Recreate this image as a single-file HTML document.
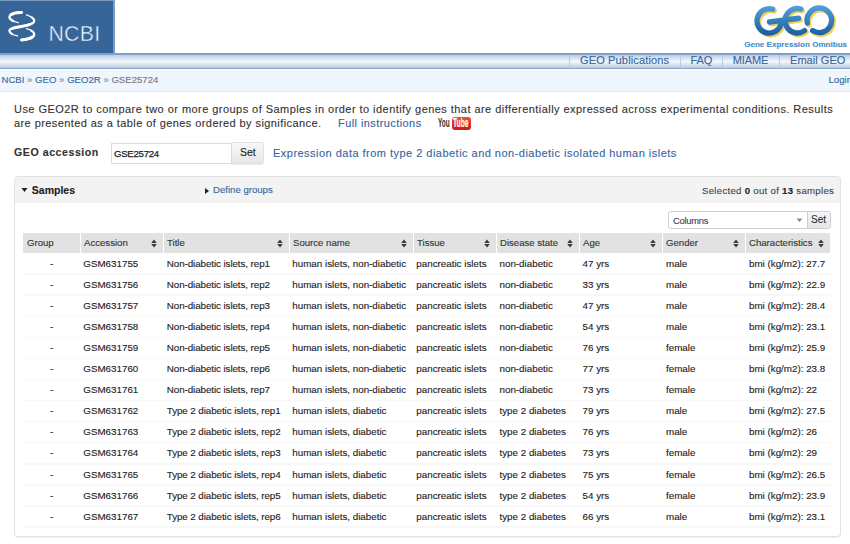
<!DOCTYPE html>
<html><head><meta charset="utf-8"><style>
html,body{margin:0;padding:0;width:850px;height:544px;overflow:hidden;background:#fff;position:relative}
.t{position:absolute;white-space:nowrap;font-family:"Liberation Sans", sans-serif;-webkit-text-stroke:0.12px currentColor;}
.b{position:absolute;}
</style></head><body>
<div class="b" style="left:0px;top:0px;width:115px;height:52.8px;background:#366699;border-top:1.5px solid #7d9dc2;border-right:2px solid #7d9dc2;box-sizing:border-box"></div>
<svg class="b" style="left:0;top:0" width="60" height="52" viewBox="0 0 60 52"><g fill="none" stroke="#fff" stroke-linecap="round"><path d="M21.5 12.4 C15 12.2 9.4 14.5 9.4 17.1 C9.4 19.5 13 21.5 18.2 22.6" stroke-width="1.3"/><path d="M21.5 12.4 C15 12.2 9.4 14.5 9.4 17.1 C9.4 19.5 13 21.5 18.2 22.6" pathLength="100" stroke-width="2.2" stroke-dasharray="80 300" stroke-dashoffset="0"/><path d="M21.5 12.4 C15 12.2 9.4 14.5 9.4 17.1 C9.4 19.5 13 21.5 18.2 22.6" pathLength="100" stroke-width="3.0" stroke-dasharray="45 300" stroke-dashoffset="0"/><path d="M26.5 14.9 C31 16.5 34.2 18.5 34.2 20.9 C34.2 25 22 26 13.2 28.1 C10.5 28.8 9.4 29.5 9.4 30.8 C9.4 33 12.5 35 17.6 35.8" stroke-width="1.3"/><path d="M26.5 14.9 C31 16.5 34.2 18.5 34.2 20.9 C34.2 25 22 26 13.2 28.1 C10.5 28.8 9.4 29.5 9.4 30.8 C9.4 33 12.5 35 17.6 35.8" pathLength="100" stroke-width="2.2" stroke-dasharray="76 300" stroke-dashoffset="-12"/><path d="M26.5 14.9 C31 16.5 34.2 18.5 34.2 20.9 C34.2 25 22 26 13.2 28.1 C10.5 28.8 9.4 29.5 9.4 30.8 C9.4 33 12.5 35 17.6 35.8" pathLength="100" stroke-width="3.0" stroke-dasharray="35 300" stroke-dashoffset="-35"/><path d="M26.5 28.7 C31 30 34.2 32 34.2 34.2 C34.2 37.5 28 39.5 21.5 39.9" stroke-width="1.3"/><path d="M26.5 28.7 C31 30 34.2 32 34.2 34.2 C34.2 37.5 28 39.5 21.5 39.9" pathLength="100" stroke-width="2.2" stroke-dasharray="80 300" stroke-dashoffset="-20"/><path d="M26.5 28.7 C31 30 34.2 32 34.2 34.2 C34.2 37.5 28 39.5 21.5 39.9" pathLength="100" stroke-width="3.0" stroke-dasharray="45 300" stroke-dashoffset="-55"/></g></svg>
<div class="t" style="left:48.4px;top:24.17px;font-size:21.3px;line-height:21.3px;color:#f4f6f8;font-weight:normal;letter-spacing:0.3px;-webkit-text-stroke:0.45px #366699;">NCBI</div>
<svg class="b" style="left:745px;top:0" width="105" height="52" viewBox="0 0 105 52">
<defs><linearGradient id="bg" gradientUnits="userSpaceOnUse" x1="0" y1="5" x2="0" y2="36"><stop offset="0" stop-color="#52a2dc"/><stop offset="1" stop-color="#1a5c9e"/></linearGradient></defs>
<g fill="none" stroke-linecap="round" stroke-width="5.4">
<g stroke="#f3cf55" transform="translate(1.6,1.8)">
<path d="M27.6 9.2 A12.2 12.2 0 1 0 35.9 24.5"/><path d="M24.5 22 L53.5 18.2"/>
<path d="M55.8 9.0 A12.2 12.2 0 1 0 59.5 30.6"/>
<path d="M67.6 30.6 A12.3 12.3 0 1 0 62.3 23"/>
</g>
<g stroke="url(#bg)">
<path d="M27.6 9.2 A12.2 12.2 0 1 0 35.9 24.5"/><path d="M24.5 22 L53.5 18.2"/>
<path d="M55.8 9.0 A12.2 12.2 0 1 0 59.5 30.6"/>
<path d="M67.6 30.6 A12.3 12.3 0 1 0 62.3 23"/>
</g>
</g></svg>
<div class="t" style="left:744.2px;top:41.18px;font-size:8.06px;line-height:8.06px;color:#4a8cc8;font-weight:bold;letter-spacing:0px;">Gene Expression Omnibus</div>
<div class="b" style="left:0px;top:53px;width:850px;height:15.5px;background:linear-gradient(#bccde2,#f3f7fb 50%,#b9cbe0);border-top:2px solid #7f9fc6;border-bottom:1.5px solid #87a5c9;box-sizing:border-box"></div>
<div class="b" style="left:569px;top:55px;width:1px;height:12px;background:#b0cdf0"></div>
<div class="b" style="left:679.5px;top:55px;width:1px;height:12px;background:#b0cdf0"></div>
<div class="b" style="left:721.5px;top:55px;width:1px;height:12px;background:#b0cdf0"></div>
<div class="b" style="left:778.5px;top:55px;width:1px;height:12px;background:#b0cdf0"></div>
<div class="t" style="left:580px;top:54.89px;font-size:11px;line-height:11px;color:#3566a0;font-weight:normal;letter-spacing:0.15px;">GEO Publications</div>
<div class="t" style="left:690.5px;top:54.89px;font-size:11px;line-height:11px;color:#3566a0;font-weight:normal;letter-spacing:-0.1px;">FAQ</div>
<div class="t" style="left:732.8px;top:54.89px;font-size:11px;line-height:11px;color:#3566a0;font-weight:normal;letter-spacing:-0.1px;">MIAME</div>
<div class="t" style="left:790px;top:54.89px;font-size:11px;line-height:11px;color:#3566a0;font-weight:normal;letter-spacing:0.05px;">Email GEO</div>
<div class="b" style="left:0px;top:68.5px;width:850px;height:23px;background:#eff6fd;border-top:1px solid #fbfdff;border-bottom:1px solid #e6e8ea;box-sizing:border-box"></div>
<div class="t" style="left:1.5px;top:74.87px;font-size:9.6px;line-height:9.6px;color:#777;font-weight:normal;letter-spacing:0px;"><span style="color:#3566a0">NCBI</span> <span style="color:#888">&raquo;</span> <span style="color:#3566a0">GEO</span> <span style="color:#888">&raquo;</span> <span style="color:#3566a0">GEO2R</span> <span style="color:#888">&raquo;</span> GSE25724</div>
<div class="t" style="left:828.5px;top:74.87px;font-size:9.6px;line-height:9.6px;color:#3566a0;font-weight:normal;letter-spacing:0px;">Login</div>
<div class="t" style="left:14px;top:104.49px;font-size:11px;line-height:11px;color:#333;font-weight:normal;letter-spacing:0.45px;">Use GEO2R to compare two or more groups of Samples in order to identify genes that are differentially expressed across experimental conditions. Results</div>
<div class="t" style="left:14px;top:117.79px;font-size:11px;line-height:11px;color:#333;font-weight:normal;letter-spacing:0.42px;">are presented as a table of genes ordered by significance.</div>
<div class="t" style="left:338px;top:117.79px;font-size:11px;line-height:11px;color:#3566a0;font-weight:normal;letter-spacing:0.42px;">Full instructions</div>
<div class="t" style="left:438.2px;top:117.44px;font-size:12px;line-height:12px;color:#3a3a3a;font-weight:bold;letter-spacing:0px;transform:scaleX(0.54);transform-origin:0 0;">You</div>
<div class="b" style="left:451.5px;top:117px;width:19px;height:12.6px;background:linear-gradient(#f0503c,#c41c14);border-radius:3px"></div>
<div class="t" style="left:453.2px;top:117.44px;font-size:12px;line-height:12px;color:#fff;font-weight:bold;letter-spacing:0px;transform:scaleX(0.56);transform-origin:0 0;">Tube</div>
<div class="t" style="left:14px;top:147.23px;font-size:10.6px;line-height:10.6px;color:#333;font-weight:bold;letter-spacing:0.55px;">GEO accession</div>
<div class="b" style="left:111px;top:143px;width:121px;height:21px;background:#fff;border:1px solid #dcdcdc;box-sizing:border-box"></div>
<div class="t" style="left:114px;top:149.17px;font-size:9.6px;line-height:9.6px;color:#222;font-weight:normal;letter-spacing:-0.25px;-webkit-text-stroke:0.25px #222;">GSE25724</div>
<div class="b" style="left:232px;top:142px;width:32px;height:22px;background:linear-gradient(#f8f8f8,#e6e6e6);border:1px solid #e2e2e2;border-left:none;border-radius:0 3px 3px 0;box-sizing:border-box;box-shadow:0 1px 1px rgba(0,0,0,0.08)"></div>
<div class="t" style="left:240px;top:146.81px;font-size:10.5px;line-height:10.5px;color:#222;font-weight:normal;letter-spacing:0px;">Set</div>
<div class="t" style="left:273px;top:147.69px;font-size:11px;line-height:11px;color:#3566a0;font-weight:normal;letter-spacing:0.475px;">Expression data from type 2 diabetic and non-diabetic isolated human islets</div>
<div class="b" style="left:14px;top:176.3px;width:827px;height:360.3px;background:#fff;border:1px solid #e2e2e2;border-radius:4px;box-sizing:border-box;box-shadow:0 1px 1px rgba(0,0,0,0.06)"></div>
<div class="b" style="left:15px;top:177px;width:825px;height:25.5px;background:#f3f3f3;border-radius:3px 3px 0 0"></div>
<svg class="b" style="left:21px;top:187px" width="8" height="6"><path d="M0.5 1 L6.5 1 L3.5 5 Z" fill="#222"/></svg>
<div class="t" style="left:31.8px;top:184.91px;font-size:10.5px;line-height:10.5px;color:#222;font-weight:bold;letter-spacing:0px;">Samples</div>
<svg class="b" style="left:204px;top:187px" width="6" height="8"><path d="M1 1 L5 4 L1 7 Z" fill="#222"/></svg>
<div class="t" style="left:213px;top:184.87px;font-size:9.6px;line-height:9.6px;color:#3566a0;font-weight:normal;letter-spacing:0px;">Define groups</div>
<div class="t" style="left:702px;top:186.27px;font-size:9.6px;line-height:9.6px;color:#444;font-weight:normal;letter-spacing:0.3px;">Selected <b style="color:#222">0</b> out of <b style="color:#222">13</b> samples</div>
<div class="b" style="left:668px;top:211px;width:140px;height:18px;background:#fff;border:1px solid #cfcfcf;border-radius:3px 0 0 3px;box-sizing:border-box"></div>
<div class="t" style="left:673px;top:215.54px;font-size:9.4px;line-height:9.4px;color:#444;font-weight:normal;letter-spacing:-0.25px;">Columns</div>
<svg class="b" style="left:796px;top:218px" width="7" height="5"><path d="M0.5 0.5 L6.5 0.5 L3.5 4 Z" fill="#888"/></svg>
<div class="b" style="left:807px;top:211px;width:24px;height:18px;background:linear-gradient(#f7f7f7,#e6e6e6);border:1px solid #cfcfcf;border-radius:0 3px 3px 0;box-sizing:border-box"></div>
<div class="t" style="left:811px;top:214.73px;font-size:10px;line-height:10px;color:#333;font-weight:normal;letter-spacing:0px;">Set</div>
<div class="b" style="left:23px;top:233px;width:57px;height:20px;background:#e2e2e2"></div>
<div class="t" style="left:27px;top:238.37px;font-size:9.6px;line-height:9.6px;color:#333;font-weight:normal;letter-spacing:0px;">Group</div>
<div class="b" style="left:81px;top:233px;width:82px;height:20px;background:#e2e2e2"></div>
<div class="t" style="left:84px;top:238.37px;font-size:9.6px;line-height:9.6px;color:#333;font-weight:normal;letter-spacing:0px;">Accession</div>
<svg class="b" style="left:151px;top:239px" width="6" height="9"><path d="M3 0.6 L5.8 4.0 L0.2 4.0 Z M3 8.4 L5.8 5.0 L0.2 5.0 Z" fill="#3a3a3a"/></svg>
<div class="b" style="left:164px;top:233px;width:125px;height:20px;background:#e2e2e2"></div>
<div class="t" style="left:167px;top:238.37px;font-size:9.6px;line-height:9.6px;color:#333;font-weight:normal;letter-spacing:0px;">Title</div>
<svg class="b" style="left:277px;top:239px" width="6" height="9"><path d="M3 0.6 L5.8 4.0 L0.2 4.0 Z M3 8.4 L5.8 5.0 L0.2 5.0 Z" fill="#3a3a3a"/></svg>
<div class="b" style="left:290px;top:233px;width:123px;height:20px;background:#e2e2e2"></div>
<div class="t" style="left:293px;top:238.37px;font-size:9.6px;line-height:9.6px;color:#333;font-weight:normal;letter-spacing:0px;">Source name</div>
<svg class="b" style="left:401px;top:239px" width="6" height="9"><path d="M3 0.6 L5.8 4.0 L0.2 4.0 Z M3 8.4 L5.8 5.0 L0.2 5.0 Z" fill="#3a3a3a"/></svg>
<div class="b" style="left:414px;top:233px;width:82px;height:20px;background:#e2e2e2"></div>
<div class="t" style="left:417px;top:238.37px;font-size:9.6px;line-height:9.6px;color:#333;font-weight:normal;letter-spacing:0px;">Tissue</div>
<svg class="b" style="left:484px;top:239px" width="6" height="9"><path d="M3 0.6 L5.8 4.0 L0.2 4.0 Z M3 8.4 L5.8 5.0 L0.2 5.0 Z" fill="#3a3a3a"/></svg>
<div class="b" style="left:497px;top:233px;width:82px;height:20px;background:#e2e2e2"></div>
<div class="t" style="left:500px;top:238.37px;font-size:9.6px;line-height:9.6px;color:#333;font-weight:normal;letter-spacing:0px;">Disease state</div>
<svg class="b" style="left:567px;top:239px" width="6" height="9"><path d="M3 0.6 L5.8 4.0 L0.2 4.0 Z M3 8.4 L5.8 5.0 L0.2 5.0 Z" fill="#3a3a3a"/></svg>
<div class="b" style="left:580px;top:233px;width:82px;height:20px;background:#e2e2e2"></div>
<div class="t" style="left:583px;top:238.37px;font-size:9.6px;line-height:9.6px;color:#333;font-weight:normal;letter-spacing:0px;">Age</div>
<svg class="b" style="left:650px;top:239px" width="6" height="9"><path d="M3 0.6 L5.8 4.0 L0.2 4.0 Z M3 8.4 L5.8 5.0 L0.2 5.0 Z" fill="#3a3a3a"/></svg>
<div class="b" style="left:663px;top:233px;width:82px;height:20px;background:#e2e2e2"></div>
<div class="t" style="left:666px;top:238.37px;font-size:9.6px;line-height:9.6px;color:#333;font-weight:normal;letter-spacing:0px;">Gender</div>
<svg class="b" style="left:733px;top:239px" width="6" height="9"><path d="M3 0.6 L5.8 4.0 L0.2 4.0 Z M3 8.4 L5.8 5.0 L0.2 5.0 Z" fill="#3a3a3a"/></svg>
<div class="b" style="left:746px;top:233px;width:84px;height:20px;background:#e2e2e2"></div>
<div class="t" style="left:749px;top:238.37px;font-size:9.6px;line-height:9.6px;color:#333;font-weight:normal;letter-spacing:0px;">Characteristics</div>
<svg class="b" style="left:818px;top:239px" width="6" height="9"><path d="M3 0.6 L5.8 4.0 L0.2 4.0 Z M3 8.4 L5.8 5.0 L0.2 5.0 Z" fill="#3a3a3a"/></svg>
<div class="t" style="left:50px;top:259.10px;font-size:9.8px;line-height:9.8px;color:#333;font-weight:normal;letter-spacing:0px;">-</div>
<div class="t" style="left:83.3px;top:259.10px;font-size:9.8px;line-height:9.8px;color:#222;font-weight:normal;letter-spacing:0px;">GSM631755</div>
<div class="t" style="left:166.8px;top:259.10px;font-size:9.8px;line-height:9.8px;color:#222;font-weight:normal;letter-spacing:-0.08px;">Non-diabetic islets, rep1</div>
<div class="t" style="left:292.3px;top:259.10px;font-size:9.8px;line-height:9.8px;color:#222;font-weight:normal;letter-spacing:0px;">human islets, non-diabetic</div>
<div class="t" style="left:416.3px;top:259.10px;font-size:9.8px;line-height:9.8px;color:#222;font-weight:normal;letter-spacing:0px;">pancreatic islets</div>
<div class="t" style="left:499.5px;top:259.10px;font-size:9.8px;line-height:9.8px;color:#222;font-weight:normal;letter-spacing:0px;">non-diabetic</div>
<div class="t" style="left:582.6px;top:259.10px;font-size:9.8px;line-height:9.8px;color:#222;font-weight:normal;letter-spacing:0px;">47 yrs</div>
<div class="t" style="left:666px;top:259.10px;font-size:9.8px;line-height:9.8px;color:#222;font-weight:normal;letter-spacing:0px;">male</div>
<div class="t" style="left:749px;top:259.10px;font-size:9.8px;line-height:9.8px;color:#222;font-weight:normal;letter-spacing:0px;">bmi (kg/m2): 27.7</div>
<div class="b" style="left:23px;top:273.4px;width:808px;height:1.6px;background:#f8f8f8"></div>
<div class="t" style="left:50px;top:280.14px;font-size:9.8px;line-height:9.8px;color:#333;font-weight:normal;letter-spacing:0px;">-</div>
<div class="t" style="left:83.3px;top:280.14px;font-size:9.8px;line-height:9.8px;color:#222;font-weight:normal;letter-spacing:0px;">GSM631756</div>
<div class="t" style="left:166.8px;top:280.14px;font-size:9.8px;line-height:9.8px;color:#222;font-weight:normal;letter-spacing:-0.08px;">Non-diabetic islets, rep2</div>
<div class="t" style="left:292.3px;top:280.14px;font-size:9.8px;line-height:9.8px;color:#222;font-weight:normal;letter-spacing:0px;">human islets, non-diabetic</div>
<div class="t" style="left:416.3px;top:280.14px;font-size:9.8px;line-height:9.8px;color:#222;font-weight:normal;letter-spacing:0px;">pancreatic islets</div>
<div class="t" style="left:499.5px;top:280.14px;font-size:9.8px;line-height:9.8px;color:#222;font-weight:normal;letter-spacing:0px;">non-diabetic</div>
<div class="t" style="left:582.6px;top:280.14px;font-size:9.8px;line-height:9.8px;color:#222;font-weight:normal;letter-spacing:0px;">33 yrs</div>
<div class="t" style="left:666px;top:280.14px;font-size:9.8px;line-height:9.8px;color:#222;font-weight:normal;letter-spacing:0px;">male</div>
<div class="t" style="left:749px;top:280.14px;font-size:9.8px;line-height:9.8px;color:#222;font-weight:normal;letter-spacing:0px;">bmi (kg/m2): 22.9</div>
<div class="b" style="left:23px;top:294.46px;width:808px;height:1.6px;background:#f8f8f8"></div>
<div class="t" style="left:50px;top:301.18px;font-size:9.8px;line-height:9.8px;color:#333;font-weight:normal;letter-spacing:0px;">-</div>
<div class="t" style="left:83.3px;top:301.18px;font-size:9.8px;line-height:9.8px;color:#222;font-weight:normal;letter-spacing:0px;">GSM631757</div>
<div class="t" style="left:166.8px;top:301.18px;font-size:9.8px;line-height:9.8px;color:#222;font-weight:normal;letter-spacing:-0.08px;">Non-diabetic islets, rep3</div>
<div class="t" style="left:292.3px;top:301.18px;font-size:9.8px;line-height:9.8px;color:#222;font-weight:normal;letter-spacing:0px;">human islets, non-diabetic</div>
<div class="t" style="left:416.3px;top:301.18px;font-size:9.8px;line-height:9.8px;color:#222;font-weight:normal;letter-spacing:0px;">pancreatic islets</div>
<div class="t" style="left:499.5px;top:301.18px;font-size:9.8px;line-height:9.8px;color:#222;font-weight:normal;letter-spacing:0px;">non-diabetic</div>
<div class="t" style="left:582.6px;top:301.18px;font-size:9.8px;line-height:9.8px;color:#222;font-weight:normal;letter-spacing:0px;">47 yrs</div>
<div class="t" style="left:666px;top:301.18px;font-size:9.8px;line-height:9.8px;color:#222;font-weight:normal;letter-spacing:0px;">male</div>
<div class="t" style="left:749px;top:301.18px;font-size:9.8px;line-height:9.8px;color:#222;font-weight:normal;letter-spacing:0px;">bmi (kg/m2): 28.4</div>
<div class="b" style="left:23px;top:315.52px;width:808px;height:1.6px;background:#f8f8f8"></div>
<div class="t" style="left:50px;top:322.22px;font-size:9.8px;line-height:9.8px;color:#333;font-weight:normal;letter-spacing:0px;">-</div>
<div class="t" style="left:83.3px;top:322.22px;font-size:9.8px;line-height:9.8px;color:#222;font-weight:normal;letter-spacing:0px;">GSM631758</div>
<div class="t" style="left:166.8px;top:322.22px;font-size:9.8px;line-height:9.8px;color:#222;font-weight:normal;letter-spacing:-0.08px;">Non-diabetic islets, rep4</div>
<div class="t" style="left:292.3px;top:322.22px;font-size:9.8px;line-height:9.8px;color:#222;font-weight:normal;letter-spacing:0px;">human islets, non-diabetic</div>
<div class="t" style="left:416.3px;top:322.22px;font-size:9.8px;line-height:9.8px;color:#222;font-weight:normal;letter-spacing:0px;">pancreatic islets</div>
<div class="t" style="left:499.5px;top:322.22px;font-size:9.8px;line-height:9.8px;color:#222;font-weight:normal;letter-spacing:0px;">non-diabetic</div>
<div class="t" style="left:582.6px;top:322.22px;font-size:9.8px;line-height:9.8px;color:#222;font-weight:normal;letter-spacing:0px;">54 yrs</div>
<div class="t" style="left:666px;top:322.22px;font-size:9.8px;line-height:9.8px;color:#222;font-weight:normal;letter-spacing:0px;">male</div>
<div class="t" style="left:749px;top:322.22px;font-size:9.8px;line-height:9.8px;color:#222;font-weight:normal;letter-spacing:0px;">bmi (kg/m2): 23.1</div>
<div class="b" style="left:23px;top:336.58px;width:808px;height:1.6px;background:#f8f8f8"></div>
<div class="t" style="left:50px;top:343.26px;font-size:9.8px;line-height:9.8px;color:#333;font-weight:normal;letter-spacing:0px;">-</div>
<div class="t" style="left:83.3px;top:343.26px;font-size:9.8px;line-height:9.8px;color:#222;font-weight:normal;letter-spacing:0px;">GSM631759</div>
<div class="t" style="left:166.8px;top:343.26px;font-size:9.8px;line-height:9.8px;color:#222;font-weight:normal;letter-spacing:-0.08px;">Non-diabetic islets, rep5</div>
<div class="t" style="left:292.3px;top:343.26px;font-size:9.8px;line-height:9.8px;color:#222;font-weight:normal;letter-spacing:0px;">human islets, non-diabetic</div>
<div class="t" style="left:416.3px;top:343.26px;font-size:9.8px;line-height:9.8px;color:#222;font-weight:normal;letter-spacing:0px;">pancreatic islets</div>
<div class="t" style="left:499.5px;top:343.26px;font-size:9.8px;line-height:9.8px;color:#222;font-weight:normal;letter-spacing:0px;">non-diabetic</div>
<div class="t" style="left:582.6px;top:343.26px;font-size:9.8px;line-height:9.8px;color:#222;font-weight:normal;letter-spacing:0px;">76 yrs</div>
<div class="t" style="left:666px;top:343.26px;font-size:9.8px;line-height:9.8px;color:#222;font-weight:normal;letter-spacing:0px;">female</div>
<div class="t" style="left:749px;top:343.26px;font-size:9.8px;line-height:9.8px;color:#222;font-weight:normal;letter-spacing:0px;">bmi (kg/m2): 25.9</div>
<div class="b" style="left:23px;top:357.64px;width:808px;height:1.6px;background:#f8f8f8"></div>
<div class="t" style="left:50px;top:364.30px;font-size:9.8px;line-height:9.8px;color:#333;font-weight:normal;letter-spacing:0px;">-</div>
<div class="t" style="left:83.3px;top:364.30px;font-size:9.8px;line-height:9.8px;color:#222;font-weight:normal;letter-spacing:0px;">GSM631760</div>
<div class="t" style="left:166.8px;top:364.30px;font-size:9.8px;line-height:9.8px;color:#222;font-weight:normal;letter-spacing:-0.08px;">Non-diabetic islets, rep6</div>
<div class="t" style="left:292.3px;top:364.30px;font-size:9.8px;line-height:9.8px;color:#222;font-weight:normal;letter-spacing:0px;">human islets, non-diabetic</div>
<div class="t" style="left:416.3px;top:364.30px;font-size:9.8px;line-height:9.8px;color:#222;font-weight:normal;letter-spacing:0px;">pancreatic islets</div>
<div class="t" style="left:499.5px;top:364.30px;font-size:9.8px;line-height:9.8px;color:#222;font-weight:normal;letter-spacing:0px;">non-diabetic</div>
<div class="t" style="left:582.6px;top:364.30px;font-size:9.8px;line-height:9.8px;color:#222;font-weight:normal;letter-spacing:0px;">77 yrs</div>
<div class="t" style="left:666px;top:364.30px;font-size:9.8px;line-height:9.8px;color:#222;font-weight:normal;letter-spacing:0px;">female</div>
<div class="t" style="left:749px;top:364.30px;font-size:9.8px;line-height:9.8px;color:#222;font-weight:normal;letter-spacing:0px;">bmi (kg/m2): 23.8</div>
<div class="b" style="left:23px;top:378.7px;width:808px;height:1.6px;background:#f8f8f8"></div>
<div class="t" style="left:50px;top:385.34px;font-size:9.8px;line-height:9.8px;color:#333;font-weight:normal;letter-spacing:0px;">-</div>
<div class="t" style="left:83.3px;top:385.34px;font-size:9.8px;line-height:9.8px;color:#222;font-weight:normal;letter-spacing:0px;">GSM631761</div>
<div class="t" style="left:166.8px;top:385.34px;font-size:9.8px;line-height:9.8px;color:#222;font-weight:normal;letter-spacing:-0.08px;">Non-diabetic islets, rep7</div>
<div class="t" style="left:292.3px;top:385.34px;font-size:9.8px;line-height:9.8px;color:#222;font-weight:normal;letter-spacing:0px;">human islets, non-diabetic</div>
<div class="t" style="left:416.3px;top:385.34px;font-size:9.8px;line-height:9.8px;color:#222;font-weight:normal;letter-spacing:0px;">pancreatic islets</div>
<div class="t" style="left:499.5px;top:385.34px;font-size:9.8px;line-height:9.8px;color:#222;font-weight:normal;letter-spacing:0px;">non-diabetic</div>
<div class="t" style="left:582.6px;top:385.34px;font-size:9.8px;line-height:9.8px;color:#222;font-weight:normal;letter-spacing:0px;">73 yrs</div>
<div class="t" style="left:666px;top:385.34px;font-size:9.8px;line-height:9.8px;color:#222;font-weight:normal;letter-spacing:0px;">female</div>
<div class="t" style="left:749px;top:385.34px;font-size:9.8px;line-height:9.8px;color:#222;font-weight:normal;letter-spacing:0px;">bmi (kg/m2): 22</div>
<div class="b" style="left:23px;top:399.76px;width:808px;height:1.6px;background:#f8f8f8"></div>
<div class="t" style="left:50px;top:406.38px;font-size:9.8px;line-height:9.8px;color:#333;font-weight:normal;letter-spacing:0px;">-</div>
<div class="t" style="left:83.3px;top:406.38px;font-size:9.8px;line-height:9.8px;color:#222;font-weight:normal;letter-spacing:0px;">GSM631762</div>
<div class="t" style="left:166.8px;top:406.38px;font-size:9.8px;line-height:9.8px;color:#222;font-weight:normal;letter-spacing:-0.08px;">Type 2 diabetic islets, rep1</div>
<div class="t" style="left:292.3px;top:406.38px;font-size:9.8px;line-height:9.8px;color:#222;font-weight:normal;letter-spacing:0px;">human islets, diabetic</div>
<div class="t" style="left:416.3px;top:406.38px;font-size:9.8px;line-height:9.8px;color:#222;font-weight:normal;letter-spacing:0px;">pancreatic islets</div>
<div class="t" style="left:499.5px;top:406.38px;font-size:9.8px;line-height:9.8px;color:#222;font-weight:normal;letter-spacing:0px;">type 2 diabetes</div>
<div class="t" style="left:582.6px;top:406.38px;font-size:9.8px;line-height:9.8px;color:#222;font-weight:normal;letter-spacing:0px;">79 yrs</div>
<div class="t" style="left:666px;top:406.38px;font-size:9.8px;line-height:9.8px;color:#222;font-weight:normal;letter-spacing:0px;">male</div>
<div class="t" style="left:749px;top:406.38px;font-size:9.8px;line-height:9.8px;color:#222;font-weight:normal;letter-spacing:0px;">bmi (kg/m2): 27.5</div>
<div class="b" style="left:23px;top:420.81999999999994px;width:808px;height:1.6px;background:#f8f8f8"></div>
<div class="t" style="left:50px;top:427.42px;font-size:9.8px;line-height:9.8px;color:#333;font-weight:normal;letter-spacing:0px;">-</div>
<div class="t" style="left:83.3px;top:427.42px;font-size:9.8px;line-height:9.8px;color:#222;font-weight:normal;letter-spacing:0px;">GSM631763</div>
<div class="t" style="left:166.8px;top:427.42px;font-size:9.8px;line-height:9.8px;color:#222;font-weight:normal;letter-spacing:-0.08px;">Type 2 diabetic islets, rep2</div>
<div class="t" style="left:292.3px;top:427.42px;font-size:9.8px;line-height:9.8px;color:#222;font-weight:normal;letter-spacing:0px;">human islets, diabetic</div>
<div class="t" style="left:416.3px;top:427.42px;font-size:9.8px;line-height:9.8px;color:#222;font-weight:normal;letter-spacing:0px;">pancreatic islets</div>
<div class="t" style="left:499.5px;top:427.42px;font-size:9.8px;line-height:9.8px;color:#222;font-weight:normal;letter-spacing:0px;">type 2 diabetes</div>
<div class="t" style="left:582.6px;top:427.42px;font-size:9.8px;line-height:9.8px;color:#222;font-weight:normal;letter-spacing:0px;">76 yrs</div>
<div class="t" style="left:666px;top:427.42px;font-size:9.8px;line-height:9.8px;color:#222;font-weight:normal;letter-spacing:0px;">male</div>
<div class="t" style="left:749px;top:427.42px;font-size:9.8px;line-height:9.8px;color:#222;font-weight:normal;letter-spacing:0px;">bmi (kg/m2): 26</div>
<div class="b" style="left:23px;top:441.88px;width:808px;height:1.6px;background:#f8f8f8"></div>
<div class="t" style="left:50px;top:448.46px;font-size:9.8px;line-height:9.8px;color:#333;font-weight:normal;letter-spacing:0px;">-</div>
<div class="t" style="left:83.3px;top:448.46px;font-size:9.8px;line-height:9.8px;color:#222;font-weight:normal;letter-spacing:0px;">GSM631764</div>
<div class="t" style="left:166.8px;top:448.46px;font-size:9.8px;line-height:9.8px;color:#222;font-weight:normal;letter-spacing:-0.08px;">Type 2 diabetic islets, rep3</div>
<div class="t" style="left:292.3px;top:448.46px;font-size:9.8px;line-height:9.8px;color:#222;font-weight:normal;letter-spacing:0px;">human islets, diabetic</div>
<div class="t" style="left:416.3px;top:448.46px;font-size:9.8px;line-height:9.8px;color:#222;font-weight:normal;letter-spacing:0px;">pancreatic islets</div>
<div class="t" style="left:499.5px;top:448.46px;font-size:9.8px;line-height:9.8px;color:#222;font-weight:normal;letter-spacing:0px;">type 2 diabetes</div>
<div class="t" style="left:582.6px;top:448.46px;font-size:9.8px;line-height:9.8px;color:#222;font-weight:normal;letter-spacing:0px;">73 yrs</div>
<div class="t" style="left:666px;top:448.46px;font-size:9.8px;line-height:9.8px;color:#222;font-weight:normal;letter-spacing:0px;">female</div>
<div class="t" style="left:749px;top:448.46px;font-size:9.8px;line-height:9.8px;color:#222;font-weight:normal;letter-spacing:0px;">bmi (kg/m2): 29</div>
<div class="b" style="left:23px;top:462.93999999999994px;width:808px;height:1.6px;background:#f8f8f8"></div>
<div class="t" style="left:50px;top:469.50px;font-size:9.8px;line-height:9.8px;color:#333;font-weight:normal;letter-spacing:0px;">-</div>
<div class="t" style="left:83.3px;top:469.50px;font-size:9.8px;line-height:9.8px;color:#222;font-weight:normal;letter-spacing:0px;">GSM631765</div>
<div class="t" style="left:166.8px;top:469.50px;font-size:9.8px;line-height:9.8px;color:#222;font-weight:normal;letter-spacing:-0.08px;">Type 2 diabetic islets, rep4</div>
<div class="t" style="left:292.3px;top:469.50px;font-size:9.8px;line-height:9.8px;color:#222;font-weight:normal;letter-spacing:0px;">human islets, diabetic</div>
<div class="t" style="left:416.3px;top:469.50px;font-size:9.8px;line-height:9.8px;color:#222;font-weight:normal;letter-spacing:0px;">pancreatic islets</div>
<div class="t" style="left:499.5px;top:469.50px;font-size:9.8px;line-height:9.8px;color:#222;font-weight:normal;letter-spacing:0px;">type 2 diabetes</div>
<div class="t" style="left:582.6px;top:469.50px;font-size:9.8px;line-height:9.8px;color:#222;font-weight:normal;letter-spacing:0px;">75 yrs</div>
<div class="t" style="left:666px;top:469.50px;font-size:9.8px;line-height:9.8px;color:#222;font-weight:normal;letter-spacing:0px;">female</div>
<div class="t" style="left:749px;top:469.50px;font-size:9.8px;line-height:9.8px;color:#222;font-weight:normal;letter-spacing:0px;">bmi (kg/m2): 26.5</div>
<div class="b" style="left:23px;top:484.0px;width:808px;height:1.6px;background:#f8f8f8"></div>
<div class="t" style="left:50px;top:490.54px;font-size:9.8px;line-height:9.8px;color:#333;font-weight:normal;letter-spacing:0px;">-</div>
<div class="t" style="left:83.3px;top:490.54px;font-size:9.8px;line-height:9.8px;color:#222;font-weight:normal;letter-spacing:0px;">GSM631766</div>
<div class="t" style="left:166.8px;top:490.54px;font-size:9.8px;line-height:9.8px;color:#222;font-weight:normal;letter-spacing:-0.08px;">Type 2 diabetic islets, rep5</div>
<div class="t" style="left:292.3px;top:490.54px;font-size:9.8px;line-height:9.8px;color:#222;font-weight:normal;letter-spacing:0px;">human islets, diabetic</div>
<div class="t" style="left:416.3px;top:490.54px;font-size:9.8px;line-height:9.8px;color:#222;font-weight:normal;letter-spacing:0px;">pancreatic islets</div>
<div class="t" style="left:499.5px;top:490.54px;font-size:9.8px;line-height:9.8px;color:#222;font-weight:normal;letter-spacing:0px;">type 2 diabetes</div>
<div class="t" style="left:582.6px;top:490.54px;font-size:9.8px;line-height:9.8px;color:#222;font-weight:normal;letter-spacing:0px;">54 yrs</div>
<div class="t" style="left:666px;top:490.54px;font-size:9.8px;line-height:9.8px;color:#222;font-weight:normal;letter-spacing:0px;">female</div>
<div class="t" style="left:749px;top:490.54px;font-size:9.8px;line-height:9.8px;color:#222;font-weight:normal;letter-spacing:0px;">bmi (kg/m2): 23.9</div>
<div class="b" style="left:23px;top:505.05999999999995px;width:808px;height:1.6px;background:#f8f8f8"></div>
<div class="t" style="left:50px;top:511.58px;font-size:9.8px;line-height:9.8px;color:#333;font-weight:normal;letter-spacing:0px;">-</div>
<div class="t" style="left:83.3px;top:511.58px;font-size:9.8px;line-height:9.8px;color:#222;font-weight:normal;letter-spacing:0px;">GSM631767</div>
<div class="t" style="left:166.8px;top:511.58px;font-size:9.8px;line-height:9.8px;color:#222;font-weight:normal;letter-spacing:-0.08px;">Type 2 diabetic islets, rep6</div>
<div class="t" style="left:292.3px;top:511.58px;font-size:9.8px;line-height:9.8px;color:#222;font-weight:normal;letter-spacing:0px;">human islets, diabetic</div>
<div class="t" style="left:416.3px;top:511.58px;font-size:9.8px;line-height:9.8px;color:#222;font-weight:normal;letter-spacing:0px;">pancreatic islets</div>
<div class="t" style="left:499.5px;top:511.58px;font-size:9.8px;line-height:9.8px;color:#222;font-weight:normal;letter-spacing:0px;">type 2 diabetes</div>
<div class="t" style="left:582.6px;top:511.58px;font-size:9.8px;line-height:9.8px;color:#222;font-weight:normal;letter-spacing:0px;">66 yrs</div>
<div class="t" style="left:666px;top:511.58px;font-size:9.8px;line-height:9.8px;color:#222;font-weight:normal;letter-spacing:0px;">male</div>
<div class="t" style="left:749px;top:511.58px;font-size:9.8px;line-height:9.8px;color:#222;font-weight:normal;letter-spacing:0px;">bmi (kg/m2): 23.1</div>
<div class="b" style="left:23px;top:526.1199999999999px;width:808px;height:1.6px;background:#f8f8f8"></div>
</body></html>
